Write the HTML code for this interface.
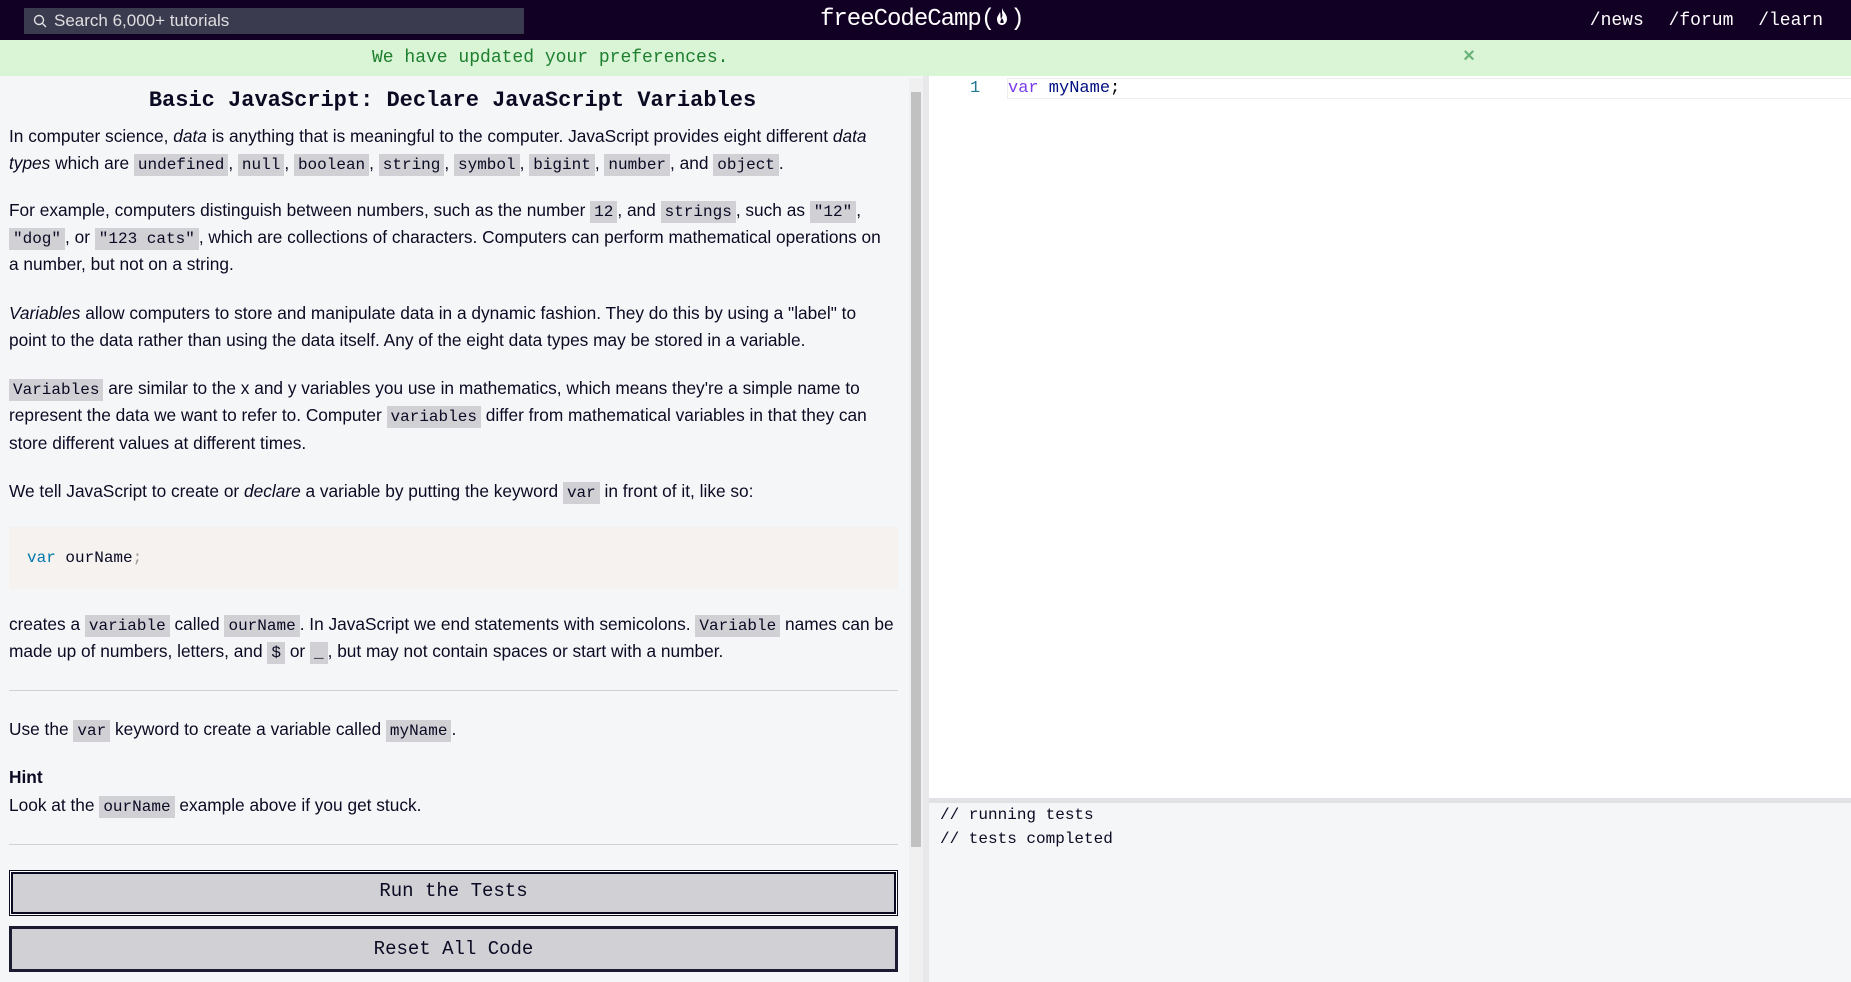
<!DOCTYPE html>
<html><head><meta charset="utf-8"><style>
*{margin:0;padding:0;box-sizing:border-box}
body{width:1851px;height:982px;overflow:hidden;background:#f5f6f7;font-family:"Liberation Sans",sans-serif;color:#0a0a23;position:relative}
.nav{position:absolute;left:0;top:0;width:1851px;height:40px;background:#110024}
.search{position:absolute;left:24px;top:8px;width:500px;height:26px;background:#3b3b4f;color:#dfdfe2;font-size:17px;line-height:26px;padding-left:30px}
.logo{position:absolute;left:820px;top:6px;color:#fff;font-family:"Liberation Mono",monospace;font-size:24px;letter-spacing:-1px}
.links{position:absolute;right:28px;top:11px;color:#fff;font-family:"Liberation Mono",monospace;font-size:18px;word-spacing:14px}
.banner{position:absolute;left:0;top:40px;width:1851px;height:36px;background:#d9f5d6;color:#1e7f2f;font-family:"Liberation Mono",monospace;font-size:18px;line-height:36px}
.l{position:absolute;left:9px;white-space:nowrap;font-size:17.3px;line-height:27px;height:27px}
code{font-family:"Liberation Mono",monospace;font-size:16px;background:#d0d0d5;padding:2px 4px}
.btn{position:absolute;left:9px;width:889px;background:#d0d0d5;border:3px solid #1b1b32;text-align:center;font-family:"Liberation Mono",monospace;font-size:19px;color:#0a0a23}
</style></head><body>
<div class="nav">
<div class="search"><svg style="position:absolute;left:9px;top:6px" width="14" height="14" viewBox="0 0 14 14"><circle cx="6" cy="6" r="4.5" fill="none" stroke="#dfdfe2" stroke-width="1.4"/><line x1="9.3" y1="9.3" x2="13" y2="13" stroke="#dfdfe2" stroke-width="1.4"/></svg>Search 6,000+ tutorials</div>
<div class="logo">freeCodeCamp(<svg width="16" height="20" viewBox="0 0 16 20" style="vertical-align:-2px"><path d="M8 1 C9 5 13 7 13 12 C13 16 10 18 8 18 C5 18 3 16 3 12 C3 9 5 8 6 5 C7 8 6 10 7 12 C8 10 9 9 8 6 Z" fill="#fff"/><path d="M8 11 C9 13 10 14 9.5 16 L6.5 16 C6 14 7 13 8 11Z" fill="#110024"/></svg>)</div>
<div class="links">/news /forum /learn</div>
</div>
<div class="banner"><span style="position:absolute;left:372px">We have updated your preferences.</span><span style="position:absolute;left:1463px;color:#6cb37a;font-weight:bold;font-size:20px">×</span></div>

<div style="position:absolute;left:909px;top:78px;width:14px;height:904px;background:#f0f0f0"></div>
<div style="position:absolute;left:911px;top:92px;width:10px;height:755px;background:#c1c1c1"></div>
<div style="position:absolute;left:923px;top:76px;width:6px;height:906px;background:#e8e8ea"></div>

<div style="position:absolute;left:0;top:85px;width:905px;text-align:center;font-family:'Liberation Mono',monospace;font-weight:bold;font-size:22px;line-height:32px">Basic JavaScript: Declare JavaScript Variables</div>

<div class="l" style="top:123px">In computer science, <i>data</i> is anything that is meaningful to the computer. JavaScript provides eight different <i>data</i></div>
<div class="l" style="top:150px"><i>types</i> which are <code>undefined</code>, <code>null</code>, <code>boolean</code>, <code>string</code>, <code>symbol</code>, <code>bigint</code>, <code>number</code>, and <code>object</code>.</div>

<div class="l" style="top:197px">For example, computers distinguish between numbers, such as the number <code>12</code>, and <code>strings</code>, such as <code>"12"</code>,</div>
<div class="l" style="top:224px"><code>"dog"</code>, or <code>"123 cats"</code>, which are collections of characters. Computers can perform mathematical operations on</div>
<div class="l" style="top:251px">a number, but not on a string.</div>

<div class="l" style="top:300px"><i>Variables</i> allow computers to store and manipulate data in a dynamic fashion. They do this by using a "label" to</div>
<div class="l" style="top:327px">point to the data rather than using the data itself. Any of the eight data types may be stored in a variable.</div>

<div class="l" style="top:375px"><code>Variables</code> are similar to the x and y variables you use in mathematics, which means they're a simple name to</div>
<div class="l" style="top:402px">represent the data we want to refer to. Computer <code>variables</code> differ from mathematical variables in that they can</div>
<div class="l" style="top:430px">store different values at different times.</div>

<div class="l" style="top:478px">We tell JavaScript to create or <i>declare</i> a variable by putting the keyword <code>var</code> in front of it, like so:</div>

<div style="position:absolute;left:9px;top:527px;width:889px;height:62px;background:#f5f2f0;font-family:'Liberation Mono',monospace;font-size:16px;line-height:62px;padding-left:18px"><span style="color:#07a">var</span> ourName<span style="color:#999">;</span></div>

<div class="l" style="top:611px">creates a <code>variable</code> called <code>ourName</code>. In JavaScript we end statements with semicolons. <code>Variable</code> names can be</div>
<div class="l" style="top:638px">made up of numbers, letters, and <code>$</code> or <code>_</code>, but may not contain spaces or start with a number.</div>

<div style="position:absolute;left:9px;top:690px;width:889px;height:1px;background:#d0d0d5"></div>
<div class="l" style="top:716px">Use the <code>var</code> keyword to create a variable called <code>myName</code>.</div>
<div class="l" style="top:764px;font-weight:bold">Hint</div>
<div class="l" style="top:792px">Look at the <code>ourName</code> example above if you get stuck.</div>
<div style="position:absolute;left:9px;top:844px;width:889px;height:1px;background:#d0d0d5"></div>

<div class="btn" style="top:870px;height:46px;line-height:41px;border:1px solid #0a0a23;box-shadow:inset 0 0 0 1px #fff,inset 0 0 0 3px #0a0a23">Run the Tests</div>
<div class="btn" style="top:926px;height:46px;line-height:40px">Reset All Code</div>

<div style="position:absolute;left:929px;top:76px;width:922px;height:722px;background:#fff"></div>
<div style="position:absolute;left:1007px;top:78px;width:844px;height:21px;border:1px solid #eee;border-right:none"></div>
<div style="position:absolute;left:970px;top:78px;font-family:'Liberation Mono',monospace;font-size:17px;line-height:21px;color:#237893">1</div>
<div style="position:absolute;left:1008px;top:78px;font-family:'Liberation Mono',monospace;font-size:17px;line-height:21px;color:#001080"><span style="color:#7a3ee8">var</span> myName<span style="color:#000">;</span></div>
<div style="position:absolute;left:929px;top:798px;width:922px;height:5px;background:#e2e2e6"></div>
<div style="position:absolute;left:940px;top:803px;font-family:'Liberation Mono',monospace;font-size:16px;line-height:24px;color:#0a0a23;white-space:pre">// running tests
// tests completed</div>
</body></html>
